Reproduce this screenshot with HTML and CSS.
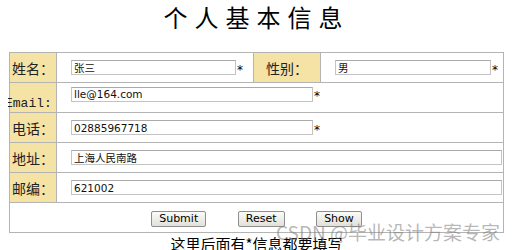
FILE: index.html
```html
<!DOCTYPE html>
<html>
<head>
  <meta charset="utf-8">
  <title>个人基本信息</title>
  <link rel="stylesheet" href="styles.css">
</head>
<body>
  <div class="page">
    <h1 class="title">个人基本信息</h1>
    <form class="info-form">
      <table class="info-table">
        <colgroup>
          <col class="col-label">
          <col class="col-field">
          <col class="col-label2">
          <col>
        </colgroup>
        <tr>
          <td class="label">姓名：</td>
          <td class="field"><div class="field-line"><input type="text" class="input-name" value="张三"><span class="req">*</span></div></td>
          <td class="label">性别：</td>
          <td class="field"><div class="field-line"><input type="text" class="input-sex" value="男"><span class="req">*</span></div></td>
        </tr>
        <tr>
          <td class="label label-email"><div class="email-text">Email:</div></td>
          <td class="field field-top" colspan="3"><div class="field-line"><input type="text" class="input-mid" value="lle@164.com"><span class="req">*</span></div></td>
        </tr>
        <tr>
          <td class="label">电话：</td>
          <td class="field" colspan="3"><div class="field-line"><input type="text" class="input-mid" value="02885967718"><span class="req">*</span></div></td>
        </tr>
        <tr>
          <td class="label">地址：</td>
          <td class="field" colspan="3"><div class="field-line"><input type="text" class="input-long" value="上海人民南路"></div></td>
        </tr>
        <tr>
          <td class="label">邮编：</td>
          <td class="field" colspan="3"><div class="field-line"><input type="text" class="input-long" value="621002"></div></td>
        </tr>
        <tr>
          <td class="buttons" colspan="4">
            <button type="submit" class="btn">Submit</button>
            <button type="reset" class="btn">Reset</button>
            <button type="button" class="btn">Show</button>
          </td>
        </tr>
      </table>
    </form>
    <p class="note">这里后面有*信息都要填写</p>
  </div>
  <div class="watermark">CSDN @毕业设计方案专家</div>
</body>
</html>
```

FILE: styles.css
```css
body {
  margin: 0 8px;
  background: #fff;
  color: #000;
  font-family: "Noto Sans CJK SC", "DejaVu Sans", sans-serif;
}
.page {
  width: 497px;
}
.title {
  margin: 2px 0 20px 0;
  height: 30px;
  line-height: 30px;
  font-size: 24px;
  font-weight: normal;
  letter-spacing: 7px;
  text-align: center;
}
.info-form {
  margin: 0;
}
.info-table {
  width: 495px;
  margin-left: 1px;
  border-collapse: collapse;
  table-layout: fixed;
  border: 1px solid #a8a8a8;
}
.col-label {
  width: 47px;
}
.col-field {
  width: 197px;
}
.col-label2 {
  width: 67px;
}
.info-table td {
  height: 29px;
  border: 1px solid #b4b4b4;
  padding: 0;
  line-height: 16px;
}
.info-table .label {
  background: #f5e3a6;
  color: #222;
  font-size: 14px;
  text-align: center;
  white-space: nowrap;
}
.info-table .label-email {
  vertical-align: bottom;
}
.email-text {
  margin: 0 0 1px -5px;
  font-family: "Liberation Mono", monospace;
  font-size: 13px;
  line-height: 15px;
  text-align: left;
}
.info-table .field {
  padding-left: 14px;
  vertical-align: middle;
}
.info-table .field-top {
  height: 26px;
  vertical-align: top;
  padding-top: 3px;
}
.field-line {
  display: flex;
  align-items: center;
  height: 16px;
}
.field-line input {
  box-sizing: border-box;
  height: 15px;
  margin: 0;
  padding: 0 2px;
  border: 1px solid #c4c4c4;
  border-top-color: #a9a9a9;
  font-family: "DejaVu Sans", "Noto Sans CJK SC", sans-serif;
  font-size: 10.5px;
  color: #111;
  background: #fff;
}
.input-name {
  width: 165px;
}
.input-sex {
  width: 156px;
}
.input-mid {
  width: 242px;
}
.input-long {
  width: 431px;
}
.req {
  margin: 4px 0 0 1px;
  font-family: "DejaVu Sans", sans-serif;
  font-size: 12px;
}
.buttons {
  text-align: center;
  vertical-align: middle;
}
.btn {
  height: 16px;
  margin: 0 14px;
  padding: 0 7px;
  border: 1px solid #8e8e8e;
  border-radius: 2px;
  background: linear-gradient(#fbfbf8, #e2e0d8);
  font-family: "DejaVu Sans", sans-serif;
  font-size: 11px;
  line-height: 13px;
  color: #000;
  vertical-align: middle;
}
.note {
  margin: 1px 0 0 0;
  font-size: 15px;
  line-height: 20px;
  text-align: center;
}
.watermark {
  position: absolute;
  left: 276px;
  top: 220px;
  font-family: "Noto Sans CJK SC", "DejaVu Sans", sans-serif;
  font-size: 19px;
  line-height: 24px;
  color: rgba(120, 120, 120, 0.55);
  white-space: nowrap;
}
```
